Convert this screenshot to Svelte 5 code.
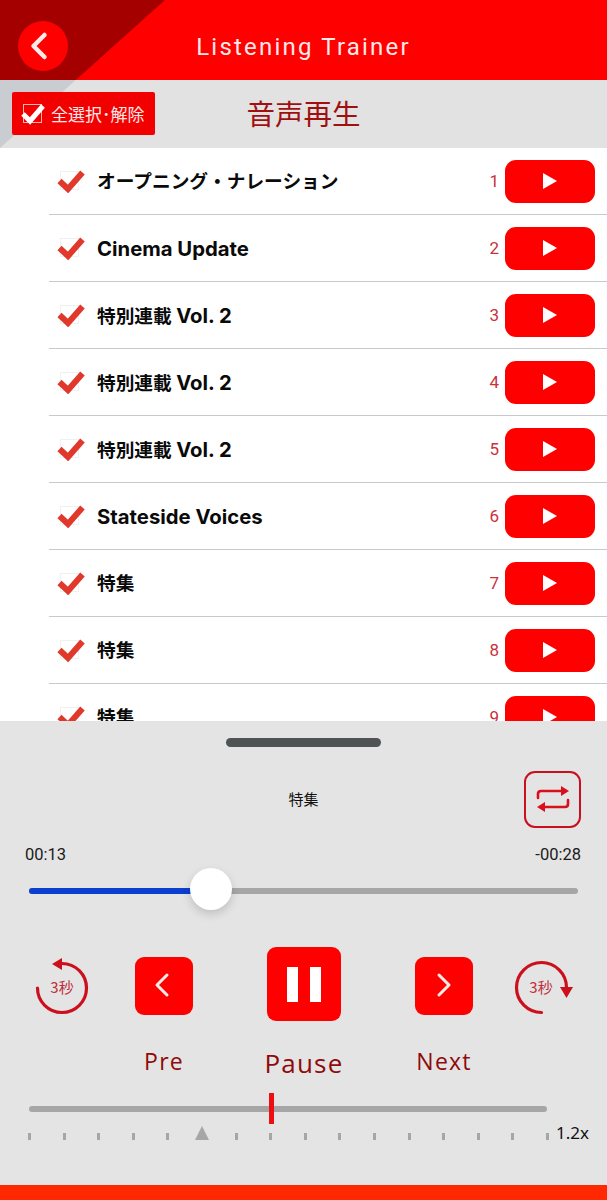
<script>
  const tracks = [
    { jp: 'オープニング・ナレーション' },
    { en: 'Cinema Update' },
    { jp: '特別連載', en: 'Vol. 2' },
    { jp: '特別連載', en: 'Vol. 2' },
    { jp: '特別連載', en: 'Vol. 2' },
    { en: 'Stateside Voices' },
    { jp: '特集' },
    { jp: '特集' },
    { jp: '特集' }
  ];
  const ticks = Array.from({ length: 16 }, (_, i) => i);
</script>

<div class="page">
  <div class="corner"></div>

  <header class="topbar">
    <button class="back" aria-label="Back">
      <svg width="22" height="30" viewBox="0 0 22 30" fill="none">
        <path d="M14.500 4L3.500 15l11 11" stroke="#ffe9e9" stroke-width="4.500" stroke-linecap="round" stroke-linejoin="round" />
      </svg>
    </button>
    <h1>Listening Trainer</h1>
  </header>

  <div class="subbar">
    <button class="select-all">
      <span class="box">
        <svg width="26" height="24" viewBox="0 0 26 24" fill="none">
          <path d="M3 12l7 7L23 4" stroke="#fff" stroke-width="5" />
        </svg>
      </span>
      全選択･解除
    </button>
    <h2>音声再生</h2>
  </div>

  <ul class="list">
    {#each tracks as track, i}
      <li class="row">
        <span class="tick">
          <span class="tick-box"></span>
          <svg width="28" height="24" viewBox="0 0 28 24" fill="none">
            <path d="M2.500 12l8.500 8L25.500 3.500" stroke="#e0392b" stroke-width="6" />
          </svg>
        </span>
        <span class="name">
          {track.jp ?? ''}
          {#if track.en}<span class="latin">{track.en}</span>{/if}
        </span>
        <span class="num">{i + 1}</span>
        <button class="play" aria-label="Play">
          <svg width="14" height="16" viewBox="0 0 14 16"><path d="M0 0l14 8-14 8z" fill="#fff" /></svg>
        </button>
      </li>
    {/each}
  </ul>

  <section class="panel">
    <div class="handle"></div>

    <div class="now">
      <span class="title">特集</span>
      <button class="repeat" aria-label="Repeat">
        <svg width="36" height="32" viewBox="0 0 36 32" fill="none">
          <path d="M3 15v-4q0-3 3-3h22" stroke="#d80f1c" stroke-width="2.600" stroke-linecap="round" />
          <path d="M26 3l8 5-8 5z" fill="#d80f1c" />
          <path d="M33 17v4q0 3-3 3H8" stroke="#d80f1c" stroke-width="2.600" stroke-linecap="round" />
          <path d="M10 19l-8 5 8 5z" fill="#d80f1c" />
        </svg>
      </button>
    </div>

    <div class="times">
      <span>00:13</span>
      <span>-00:28</span>
    </div>

    <div class="seek">
      <div class="seek-fill"></div>
      <div class="thumb"></div>
    </div>

    <div class="controls">
      <div class="ctrl skip">
        <svg width="54" height="60" viewBox="0 0 54 60" fill="none">
          <path d="M2.500 33A24.500 24.500 0 1 0 27 8.500" stroke="#cc0f1c" stroke-width="3.200" stroke-linecap="round" />
          <path d="M27 3v12L17 9z" fill="#cc0f1c" />
          <text x="27" y="38" text-anchor="middle">3秒</text>
        </svg>
      </div>
      <div class="ctrl">
        <button class="square" aria-label="Previous">
          <svg class="pre-icon" width="16" height="26" viewBox="0 0 16 26" fill="none">
            <path d="M13 3L3 13l10 10" stroke="#ffe9e9" stroke-width="3" stroke-linecap="round" stroke-linejoin="round" />
          </svg>
        </button>
        <span class="label">Pre</span>
      </div>
      <div class="ctrl main">
        <button class="square big" aria-label="Pause">
          <i></i><i></i>
        </button>
        <span class="label">Pause</span>
      </div>
      <div class="ctrl">
        <button class="square" aria-label="Next">
          <svg class="next-icon" width="16" height="26" viewBox="0 0 16 26" fill="none">
            <path d="M3 3l10 10L3 23" stroke="#ffe9e9" stroke-width="3" stroke-linecap="round" stroke-linejoin="round" />
          </svg>
        </button>
        <span class="label">Next</span>
      </div>
      <div class="ctrl skip">
        <svg width="62" height="60" viewBox="0 0 62 60" fill="none">
          <path d="M27.500 57.500A25 25 0 1 1 52.500 32.500" stroke="#cc0f1c" stroke-width="3.200" stroke-linecap="round" />
          <path d="M46 32h13l-6.500 11z" fill="#cc0f1c" />
          <text x="27" y="38" text-anchor="middle">3秒</text>
        </svg>
      </div>
    </div>

    <div class="speed">
      <div class="speed-track">
        <div class="marker"></div>
      </div>
      <div class="scale">
        {#each ticks as t}
          {#if t === 5}
            <span class="pointer"></span>
          {:else}
            <span class="mark"></span>
          {/if}
        {/each}
        <span class="rate">1.2x</span>
      </div>
    </div>
  </section>

  <div class="footer"></div>
</div>

<style>
  :global(body) {
    margin: 0;
    background: #fff;
  }

  .page {
    position: relative;
    width: 607px;
    height: 1200px;
    display: flex;
    flex-direction: column;
    overflow: hidden;
    font-family: 'Noto Sans', 'Noto Sans CJK JP', sans-serif;
  }

  button {
    border: none;
    padding: 0;
    cursor: pointer;
    font-family: inherit;
  }

  h1,
  h2 {
    margin: 0;
    font-weight: 400;
  }

  /* diagonal decoration across the two top bars */
  .corner {
    position: absolute;
    left: 0;
    top: 0;
    width: 165px;
    height: 148px;
    background: linear-gradient(180deg, #a40000 0, #a40000 80px, #c9ccd0 80px);
    clip-path: polygon(0 0, 100% 0, 0 100%);
    z-index: 1;
  }

  .topbar {
    height: 80px;
    flex-shrink: 0;
    background: #ff0000;
    display: flex;
    align-items: center;
    justify-content: center;
    position: relative;
  }

  .back {
    position: absolute;
    left: 18px;
    top: 21px;
    width: 50px;
    height: 50px;
    border-radius: 50%;
    background: #ff0000;
    display: flex;
    align-items: center;
    justify-content: center;
    z-index: 2;
  }

  .back svg {
    margin-right: 4px;
  }

  .topbar h1 {
    font-family: 'Roboto', sans-serif;
    font-weight: 400;
    font-size: 24px;
    letter-spacing: 2.200px;
    color: #ffe9e9;
    margin-top: 14px;
  }

  .subbar {
    height: 68px;
    flex-shrink: 0;
    background: #e2e2e2;
    display: flex;
    align-items: center;
    justify-content: center;
    position: relative;
  }

  .select-all {
    position: absolute;
    left: 12px;
    top: 12px;
    width: 143px;
    height: 43px;
    background: #f20000;
    border-radius: 2px;
    color: #ffe9e9;
    font-size: 17px;
    display: flex;
    align-items: center;
    gap: 9px;
    padding-left: 11px;
    box-sizing: border-box;
    white-space: nowrap;
    z-index: 2;
  }

  .box {
    width: 19px;
    height: 19px;
    border: 1px solid #ffb3b3;
    box-sizing: border-box;
    flex-shrink: 0;
    position: relative;
  }

  .box svg {
    position: absolute;
    left: -4px;
    top: -3px;
  }

  .subbar h2 {
    font-size: 28.500px;
    color: #a01010;
    line-height: 1;
  }

  .list {
    flex: 1;
    min-height: 0;
    margin: 0;
    padding: 0;
    list-style: none;
    background: #fff;
    overflow: hidden;
  }

  .row {
    height: 67px;
    box-sizing: border-box;
    margin-left: 49px;
    padding-right: 12px;
    border-bottom: 1px solid #c9c9c9;
    display: flex;
    align-items: center;
  }

  .tick {
    width: 48px;
    height: 24px;
    padding-left: 8px;
    box-sizing: border-box;
    flex-shrink: 0;
    position: relative;
  }

  .tick-box {
    position: absolute;
    left: 11px;
    top: 2px;
    width: 19px;
    height: 19px;
    border: 1px solid #f0f0f0;
    box-sizing: border-box;
  }

  .tick svg {
    position: relative;
  }

  .name {
    flex: 1;
    font-family: 'Inter', 'Noto Sans CJK JP', sans-serif;
    font-weight: 700;
    font-size: 18.700px;
    line-height: 24px;
    margin-top: 2px;
    color: #0a0a0a;
  }

  .latin {
    font-size: 20.300px;
  }

  .num {
    width: 30px;
    margin-right: 6px;
    margin-top: -1px;
    text-align: right;
    font-family: 'Roboto', sans-serif;
    font-size: 17px;
    color: #c8323a;
  }

  .play {
    width: 90px;
    height: 43px;
    border-radius: 11px;
    background: #ff0000;
    display: flex;
    align-items: center;
    justify-content: center;
    flex-shrink: 0;
  }

  .panel {
    height: 464px;
    flex-shrink: 0;
    background: #e4e4e4;
    box-sizing: border-box;
    padding-top: 17px;
    position: relative;
  }

  .handle {
    width: 155px;
    height: 9px;
    margin: 0 auto;
    border-radius: 5px;
    background: #505353;
  }

  .now {
    height: 56px;
    margin-top: 24px;
    padding-right: 26px;
    display: flex;
    align-items: center;
    justify-content: flex-end;
    position: relative;
  }

  .title {
    position: absolute;
    left: 0;
    right: 0;
    top: 17px;
    text-align: center;
    font-size: 15px;
    color: #111;
  }

  .repeat {
    width: 57px;
    height: 57px;
    box-sizing: border-box;
    border: 2px solid #c8101e;
    border-radius: 11px;
    background: transparent;
    display: flex;
    align-items: center;
    justify-content: center;
  }

  .times {
    display: flex;
    justify-content: space-between;
    padding: 0 26px 0 25px;
    margin-top: 18px;
    font-family: 'Roboto', sans-serif;
    font-size: 16.500px;
    line-height: 20px;
    color: #1a1a1a;
  }

  .seek {
    height: 6px;
    margin: 23px 29px 0;
    border-radius: 3px;
    background: #a6a6a6;
    position: relative;
  }

  .seek-fill {
    width: 168px;
    height: 100%;
    border-radius: 3px 0 0 3px;
    background: #0a3fd0;
  }

  .thumb {
    position: absolute;
    left: 161px;
    top: -20px;
    width: 42px;
    height: 42px;
    border-radius: 50%;
    background: #fff;
    box-shadow: 0 4px 10px rgba(0, 0, 0, 0.16);
  }

  .controls {
    display: grid;
    grid-template-columns: 100px 132px 148px 99px 62px;
    justify-items: start;
    padding-left: 35px;
    margin-top: 53px;
  }

  .ctrl {
    width: 58px;
    display: flex;
    flex-direction: column;
    align-items: center;
    padding-top: 10px;
  }

  .ctrl.main {
    width: 74px;
    padding-top: 0;
  }

  .ctrl.skip {
    width: 54px;
    padding-top: 8px;
    align-items: flex-start;
  }

  .skip svg {
    flex-shrink: 0;
  }

  .skip text {
    font-size: 15px;
    fill: #c0303c;
    font-family: 'Noto Sans CJK JP', sans-serif;
  }

  .square {
    width: 58px;
    height: 58px;
    border-radius: 9px;
    background: #ff0000;
    display: flex;
    align-items: center;
    justify-content: center;
    flex-shrink: 0;
  }

  .pre-icon {
    margin: 0 4px 2px 0;
  }

  .next-icon {
    margin-bottom: 2px;
  }

  .square.big {
    width: 74px;
    height: 74px;
    gap: 12px;
  }

  .square.big i {
    width: 11px;
    height: 35px;
    background: #fff;
  }

  .label {
    margin-top: 29px;
    font-family: 'Open Sans', sans-serif;
    font-size: 23px;
    line-height: 34px;
    letter-spacing: 1.200px;
    color: #8f0a0a;
    white-space: nowrap;
  }

  .main .label {
    font-size: 26px;
    margin-top: 25px;
  }

  .speed {
    margin-top: 26px;
    padding-left: 29px;
  }

  .speed-track {
    width: 518px;
    height: 6px;
    border-radius: 3px;
    background: #a6a6a6;
    position: relative;
  }

  .marker {
    position: absolute;
    left: 240px;
    top: -13px;
    width: 5px;
    height: 31px;
    background: #ee0d12;
  }

  .scale {
    width: 521px;
    margin-left: -1px;
    margin-top: 14px;
    display: flex;
    justify-content: space-between;
    align-items: flex-end;
    position: relative;
  }

  .mark {
    width: 3px;
    height: 7px;
    background: #a6a6a6;
  }

  .pointer {
    width: 0;
    height: 0;
    margin: 0 -6px;
    border-left: 7px solid transparent;
    border-right: 7px solid transparent;
    border-bottom: 14px solid #a6a6a6;
  }

  .rate {
    position: absolute;
    left: 528px;
    top: -4px;
    font-size: 17px;
    line-height: 22px;
    color: #111;
  }

  .footer {
    height: 15px;
    flex-shrink: 0;
    background: #ff2800;
  }
</style>
